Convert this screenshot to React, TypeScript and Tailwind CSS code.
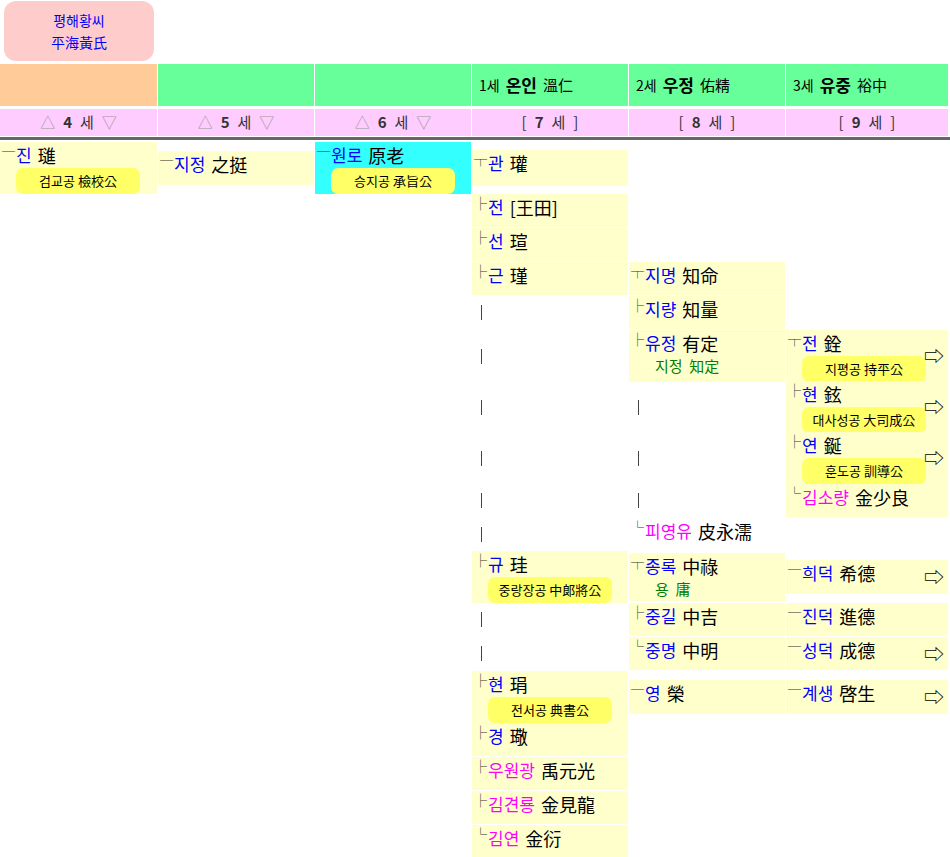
import React from "react";

type C = {
  conn?: string;
  kr?: string;
  hj?: string;
  pink?: boolean;
  badge?: string;
  sub?: [string, string];
  arrow?: boolean;
  cyan?: boolean;
  bar?: boolean;
  inset?: string;
  plain?: boolean;
};

const font = { fontFamily: '"Noto Sans CJK KR", "Noto Sans", sans-serif' };

function Cell({ c }: { c?: C }) {
  if (!c) return <div />;
  if (c.bar)
    return (
      <div className="flex items-center pl-[9px]">
        <div className="h-[15px] w-px bg-[#444]" />
      </div>
    );
  const bg = c.plain ? "" : c.cyan ? "bg-[#33ffff]" : "bg-[#ffffcc]";
  return (
    <div className={`${bg} ${c.inset ?? ""} relative flex flex-col`}>
      <div className="flex items-start leading-[26px]">
        <span className="w-[16px] text-[13px] leading-[18px] text-[#333] pl-[2px]">{c.conn}</span>
        <span className={`text-[17px] ${c.pink ? "text-[#ff00ff]" : "text-[#0000ff]"}`}>{c.kr}</span>
        <span className="ml-[6px] text-[18px] text-black">{c.hj}</span>
      </div>
      {c.sub && (
        <div className="pl-[26px] text-[15px] leading-[20px] text-[#008000]">
          {c.sub[0]}&nbsp; {c.sub[1]}
        </div>
      )}
      {c.badge && (
        <div className="ml-[16px] flex h-[26px] w-[124px] items-center justify-center rounded-[7px] bg-[#ffff66] text-[13px] text-black whitespace-nowrap">
          {c.badge}
        </div>
      )}
      {c.arrow && (
        <span className="absolute right-[4px] top-1/2 -translate-y-1/2 text-[20px] leading-none text-black">⇨</span>
      )}
    </div>
  );
}

const cols = "grid grid-cols-[157px_156px_156px_156px_156px_162px] gap-x-px";

function Row({ h, cells }: { h: string; cells: (C | undefined)[] }) {
  return (
    <div className={`${cols} ${h} mt-px`}>
      {cells.map((c, i) => (
        <Cell key={i} c={c} />
      ))}
    </div>
  );
}

const bar: C = { bar: true };
const n = undefined;

export default function App() {
  return (
    <div className="w-[950px] h-[857px] overflow-hidden bg-white" style={font}>
      <div className="pt-[1px] pl-[4px]">
        <div className="flex h-[60px] w-[150px] flex-col items-center justify-center rounded-[12px] bg-[#ffcccc] text-[14px] leading-[22px] text-[#0000ff]">
          <div>평해황씨</div>
          <div>平海黃氏</div>
        </div>
      </div>
      <div className={`${cols} mt-[3px] h-[42px]`}>
        <div className="bg-[#ffcc99]" />
        <div className="bg-[#66ff99]" />
        <div className="bg-[#66ff99]" />
        {[
          ["1세", "온인", "溫仁"],
          ["2세", "우정", "佑精"],
          ["3세", "유중", "裕中"],
        ].map(([a, b, c]) => (
          <div key={a} className="flex items-center bg-[#66ff99] pl-[7px] text-black">
            <span className="text-[14px]">{a}</span>
            <span className="ml-[6px] text-[17px] font-bold">{b}</span>
            <span className="ml-[6px] text-[15px]">{c}</span>
          </div>
        ))}
      </div>
      <div className={`${cols} mt-[3px] h-[27px]`}>
        {["4", "5", "6"].map((x) => (
          <div key={x} className="flex items-center justify-center gap-[8px] bg-[#ffccff] text-[15px]">
            <span className="text-[#999]">△</span>
            <span className="font-bold text-[#333]">{x}</span>
            <span className="text-[#333]">세</span>
            <span className="text-[#999]">▽</span>
          </div>
        ))}
        {["7", "8", "9"].map((x) => (
          <div key={x} className="flex items-center justify-center gap-[8px] bg-[#ffccff] text-[15px] text-[#333]">
            <span>[</span>
            <span className="font-bold">{x}</span>
            <span>세</span>
            <span>]</span>
          </div>
        ))}
      </div>
      <div className="mt-[1px] h-[3px] w-[950px] bg-[#666]" />
      <div className="mt-[2px]">
        <Row
          h="h-[51px]"
          cells={[
            { conn: "─", kr: "진", hj: "璡", badge: "검교공 檢校公" },
            { conn: "─", kr: "지정", hj: "之挺", inset: "my-[9px]" },
            { conn: "─", kr: "원로", hj: "原老", badge: "승지공 承旨公", cyan: true },
            { conn: "┬", kr: "관", hj: "瓘", inset: "my-[8px]" },
            n,
            n,
          ]}
        />
        <Row h="h-[33px]" cells={[n, n, n, { conn: "├", kr: "전", hj: "[王田]" }, n, n]} />
        <Row h="h-[33px]" cells={[n, n, n, { conn: "├", kr: "선", hj: "瑄" }, n, n]} />
        <Row h="h-[33px]" cells={[n, n, n, { conn: "├", kr: "근", hj: "瑾" }, { conn: "┬", kr: "지명", hj: "知命" }, n]} />
        <Row h="h-[33px]" cells={[n, n, n, bar, { conn: "├", kr: "지량", hj: "知量" }, n]} />
        <Row
          h="h-[50px]"
          cells={[n, n, n, bar, { conn: "├", kr: "유정", hj: "有定", sub: ["지정", "知定"] }, { conn: "┬", kr: "전", hj: "銓", badge: "지평공 持平公", arrow: true }]}
        />
        <Row h="h-[50px]" cells={[n, n, n, bar, bar, { conn: "├", kr: "현", hj: "鉉", badge: "대사성공 大司成公", arrow: true }]} />
        <Row h="h-[51px]" cells={[n, n, n, bar, bar, { conn: "├", kr: "연", hj: "鋋", badge: "훈도공 訓導公", arrow: true }]} />
        <Row h="h-[33px]" cells={[n, n, n, bar, bar, { conn: "└", kr: "김소량", hj: "金少良", pink: true }]} />
        <Row h="h-[32px]" cells={[n, n, n, bar, { conn: "└", kr: "피영유", hj: "皮永濡", pink: true, plain: true }, n]} />
        <Row
          h="h-[51px]"
          cells={[
            n,
            n,
            n,
            { conn: "├", kr: "규", hj: "珪", badge: "중랑장공 中郞將公" },
            { conn: "┬", kr: "종록", hj: "中祿", sub: ["용", "庸"], inset: "my-[2px]" },
            { conn: "─", kr: "희덕", hj: "希德", arrow: true, inset: "my-[9px]" },
          ]}
        />
        <Row h="h-[33px]" cells={[n, n, n, bar, { conn: "├", kr: "중길", hj: "中吉" }, { conn: "─", kr: "진덕", hj: "進德" }]} />
        <Row h="h-[33px]" cells={[n, n, n, bar, { conn: "└", kr: "중명", hj: "中明" }, { conn: "─", kr: "성덕", hj: "成德", arrow: true }]} />
        <Row
          h="h-[51px]"
          cells={[
            n,
            n,
            n,
            { conn: "├", kr: "현", hj: "琄", badge: "전서공 典書公" },
            { conn: "─", kr: "영", hj: "榮", inset: "my-[9px]" },
            { conn: "─", kr: "계생", hj: "啓生", arrow: true, inset: "my-[9px]" },
          ]}
        />
        <Row h="h-[33px]" cells={[n, n, n, { conn: "├", kr: "경", hj: "璥" }, n, n]} />
        <Row h="h-[33px]" cells={[n, n, n, { conn: "├", kr: "우원광", hj: "禹元光", pink: true }, n, n]} />
        <Row h="h-[33px]" cells={[n, n, n, { conn: "├", kr: "김견룡", hj: "金見龍", pink: true }, n, n]} />
        <Row h="h-[33px]" cells={[n, n, n, { conn: "└", kr: "김연", hj: "金衍", pink: true }, n, n]} />
      </div>
    </div>
  );
}
